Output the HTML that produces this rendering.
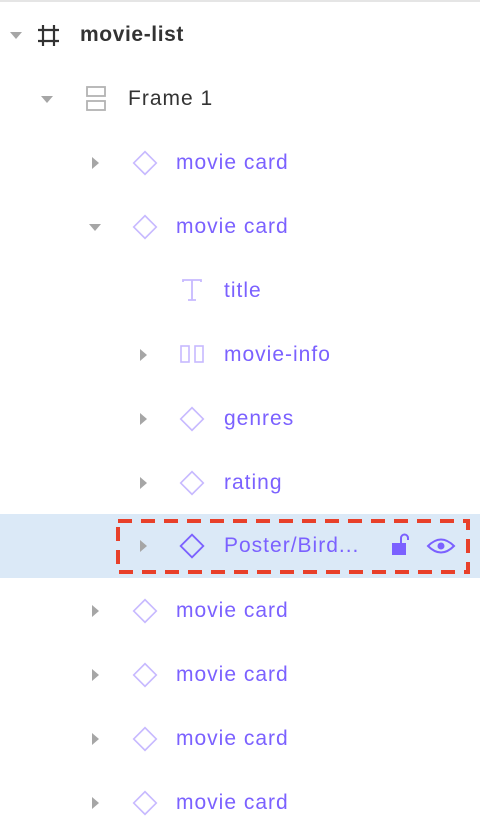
<!DOCTYPE html>
<html><head><style>
body{margin:0;width:480px;height:840px;background:#fff;position:relative;overflow:hidden;font-family:"Liberation Sans",sans-serif}
.top{position:absolute;left:0;top:0;width:480px;height:2px;background:#e5e5e5}
.t{position:absolute;top:0;line-height:64px;font-size:21px;color:#7b61ff;white-space:nowrap;letter-spacing:1px}
svg{position:absolute}
</style></head><body>
<div class="top"></div>
<svg width="480" height="840" style="left:0;top:0">
<defs>
<polygon id="dn" points="-6,-3 6,-3 0,4" fill="#a6a6a6"/>
<polygon id="rt" points="-3,-6 4,0 -3,6" fill="#a6a6a6"/>
<rect id="dm" x="-8" y="-8" width="16" height="16" transform="rotate(45)" fill="none" stroke="#c7b9ff" stroke-width="1.6"/>
</defs>
<rect x="0" y="514" width="480" height="64" fill="#dbe9f7"/>
<use href="#dn" x="16" y="35"/>
<g stroke="#333" stroke-width="2.2"><line x1="38" y1="30" x2="59" y2="30"/><line x1="38" y1="41" x2="59" y2="41"/><line x1="43" y1="25" x2="43" y2="46"/><line x1="54" y1="25" x2="54" y2="46"/></g>
<use href="#dn" x="47" y="99"/>
<g fill="none" stroke="#b3b3b3" stroke-width="1.8"><rect x="87" y="87" width="18" height="9"/><rect x="87" y="101" width="18" height="9"/></g>
<use href="#rt" x="95" y="163"/><use href="#dm" x="145" y="163"/>
<use href="#dn" x="95" y="227"/><use href="#dm" x="145" y="227"/>
<g fill="none" stroke="#c7b9ff" stroke-width="1.8"><path d="M183 282V280H201V282M192 280V300M188 300H196"/></g>
<use href="#rt" x="143" y="355"/>
<g fill="none" stroke="#c7b9ff" stroke-width="1.6"><rect x="181" y="346" width="8" height="16"/><rect x="195" y="346" width="8" height="16"/></g>
<use href="#rt" x="143" y="419"/><use href="#dm" x="192" y="419"/>
<use href="#rt" x="143" y="483"/><use href="#dm" x="192" y="483"/>
<use href="#rt" x="143" y="546"/>
<rect x="-8" y="-8" width="16" height="16" transform="translate(192 546) rotate(45)" fill="none" stroke="#7b61ff" stroke-width="1.8"/>
<rect x="392" y="543" width="14" height="12" fill="#7b61ff"/>
<path d="M401 543V538a3.5 3.5 0 0 1 7 0v2" fill="none" stroke="#7b61ff" stroke-width="2"/>
<path d="M428 546Q441 533 454 546Q441 559 428 546Z" fill="none" stroke="#7b61ff" stroke-width="2"/>
<circle cx="441" cy="546" r="3.5" fill="#7b61ff"/>
<rect x="118" y="521" width="350" height="51" fill="none" stroke="#e8402a" stroke-width="4" stroke-dasharray="14 9"/>
<use href="#rt" x="95" y="611"/><use href="#dm" x="145" y="611"/>
<use href="#rt" x="95" y="675"/><use href="#dm" x="145" y="675"/>
<use href="#rt" x="95" y="739"/><use href="#dm" x="145" y="739"/>
<use href="#rt" x="95" y="803"/><use href="#dm" x="145" y="803"/>
</svg>
<div class="t" style="left:80px;top:3px;color:#333;font-weight:bold;letter-spacing:0.6px">movie-list</div>
<div class="t" style="left:128px;top:67px;color:#333">Frame 1</div>
<div class="t" style="left:176px;top:131px">movie card</div>
<div class="t" style="left:176px;top:195px">movie card</div>
<div class="t" style="left:224px;top:259px">title</div>
<div class="t" style="left:224px;top:323px">movie-info</div>
<div class="t" style="left:224px;top:387px">genres</div>
<div class="t" style="left:224px;top:451px">rating</div>
<div class="t" style="left:224px;top:514px">Poster/Bird...</div>
<div class="t" style="left:176px;top:579px">movie card</div>
<div class="t" style="left:176px;top:643px">movie card</div>
<div class="t" style="left:176px;top:707px">movie card</div>
<div class="t" style="left:176px;top:771px">movie card</div>
</body></html>
